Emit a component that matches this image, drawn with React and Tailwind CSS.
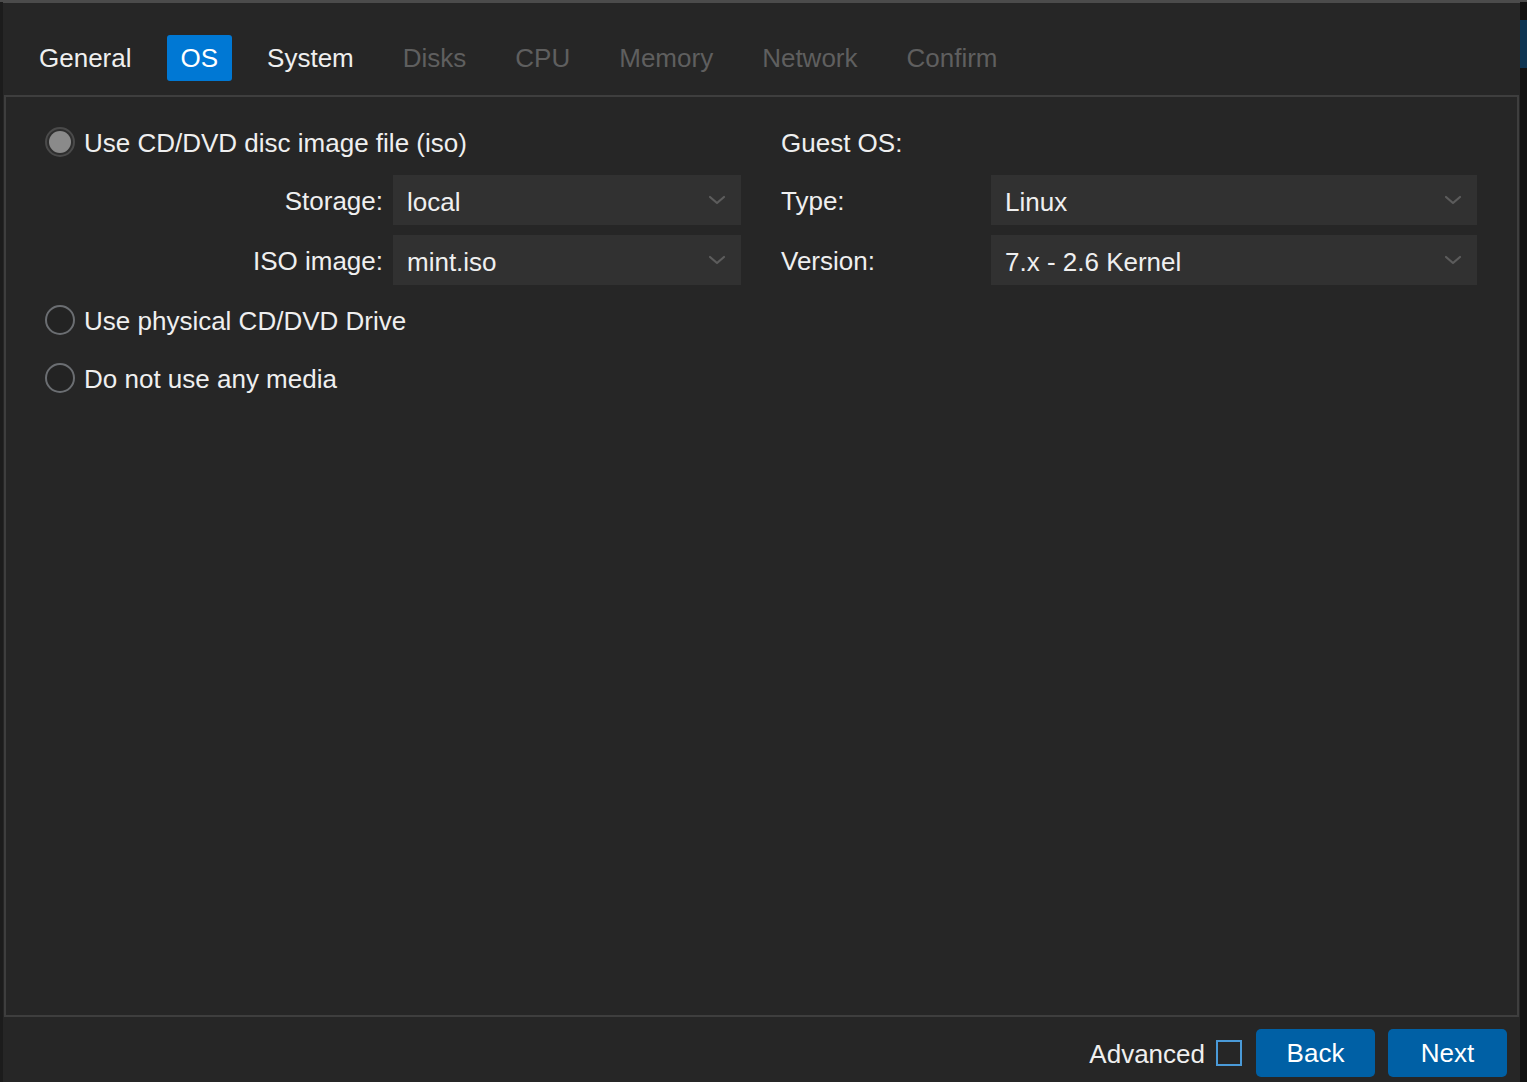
import React, { useState } from 'react';

const tabs = [
  { name: 'General', enabled: true },
  { name: 'OS', enabled: true },
  { name: 'System', enabled: true },
  { name: 'Disks', enabled: false },
  { name: 'CPU', enabled: false },
  { name: 'Memory', enabled: false },
  { name: 'Network', enabled: false },
  { name: 'Confirm', enabled: false },
];

const Chevron = () => (
  <svg width="18" height="10" viewBox="0 0 18 10" fill="none" stroke="#5c5c5c" strokeWidth="2.2" strokeLinecap="round" strokeLinejoin="round">
    <path d="M2 2l7 6 7-6" />
  </svg>
);

const Select = ({ value, width }) => (
  <div className={`${width} h-[50px] bg-[#313131] flex items-center justify-between pl-[14px] pr-[15px]`}>
    <span className="text-[#efefef] pt-[3px]">{value}</span>
    <Chevron />
  </div>
);

const Radio = ({ checked, label, onClick }) => (
  <div className="flex items-center h-[46px] cursor-pointer" onClick={onClick}>
    <div className={`w-[30px] h-[30px] rounded-full border-2 flex items-center justify-center ${checked ? 'border-[#4a4a4a] bg-[#2e2e2e]' : 'border-[#6b6e72] bg-[#232323]'}`}>
      {checked && <div className="w-[22px] h-[22px] rounded-full bg-[#8a8a8a]" />}
    </div>
    <span className="ml-[9px] text-[#efefef] pt-[1px]">{label}</span>
  </div>
);

const App = () => {
  const [media, setMedia] = useState('iso');

  return (
    <div className="w-[1527px] h-[1082px] flex bg-[#121212] overflow-hidden text-[26px] leading-none" style={{ fontFamily: '"Liberation Sans", Arial, sans-serif' }}>
      <div className="w-[3px] bg-[#1c1c1c] border-t-2 border-[#4b4b4b]" />
      <div className="w-[1517px] flex flex-col bg-[#262626] border-t-[3px] border-[#4b4b4b]">
        {/* Tabs */}
        <div className="flex items-center gap-[21px] pl-[22px] pt-[32px] pb-[14px]">
          {tabs.map((t) => (
            <div
              key={t.name}
              className={`h-[46px] px-[14px] flex items-center rounded-[3px] ${
                t.name === 'OS' ? 'bg-[#0078d4] text-white' : t.enabled ? 'text-[#efefef]' : 'text-[#5f5f5f]'
              }`}
            >
              {t.name}
            </div>
          ))}
        </div>

        {/* Panel */}
        <div className="ml-[1px] mr-[1px] h-[922px] border-2 border-[#3e3e3e] pt-[22px] pl-[39px] flex gap-[40px]">
          <div className="w-[696px] flex flex-col">
            <Radio checked={media === 'iso'} label="Use CD/DVD disc image file (iso)" onClick={() => setMedia('iso')} />
            <div className="flex items-center mt-[10px]">
              <div className="w-[338px] text-right text-[#efefef] pt-[1px]">Storage:</div>
              <div className="ml-[10px]"><Select value="local" width="w-[348px]" /></div>
            </div>
            <div className="flex items-center mt-[10px]">
              <div className="w-[338px] text-right text-[#efefef] pt-[1px]">ISO image:</div>
              <div className="ml-[10px]"><Select value="mint.iso" width="w-[348px]" /></div>
            </div>
            <div className="mt-[12px]">
              <Radio checked={media === 'phys'} label="Use physical CD/DVD Drive" onClick={() => setMedia('phys')} />
            </div>
            <div className="mt-[12px]">
              <Radio checked={media === 'none'} label="Do not use any media" onClick={() => setMedia('none')} />
            </div>
          </div>

          <div className="w-[696px] flex flex-col">
            <div className="h-[46px] flex items-center text-[#efefef] pt-[1px]">Guest OS:</div>
            <div className="flex items-center mt-[10px]">
              <div className="w-[210px] text-[#efefef] pt-[1px]">Type:</div>
              <Select value="Linux" width="w-[486px]" />
            </div>
            <div className="flex items-center mt-[10px]">
              <div className="w-[210px] text-[#efefef] pt-[1px]">Version:</div>
              <Select value="7.x - 2.6 Kernel" width="w-[486px]" />
            </div>
          </div>
        </div>

        {/* Footer */}
        <div className="flex items-center justify-end pr-[13px] pt-[12px]">
          <span className="text-[#efefef] mt-[2px]">Advanced</span>
          <div className="ml-[11px] w-[26px] h-[26px] border-2 border-[#4a9ad8] bg-[#262626]" />
          <button className="ml-[14px] w-[119px] h-[48px] rounded-[5px] bg-[#0060a5] text-white text-[26px]">Back</button>
          <button className="ml-[13px] w-[119px] h-[48px] rounded-[5px] bg-[#0060a5] text-white text-[26px]">Next</button>
        </div>
      </div>
      <div className="flex-1 flex flex-col border-t-2 border-[#4b4b4b]">
        <div className="mt-[18px] h-[48px] bg-[#0e3552]" />
      </div>
    </div>
  );
};

export default App;
